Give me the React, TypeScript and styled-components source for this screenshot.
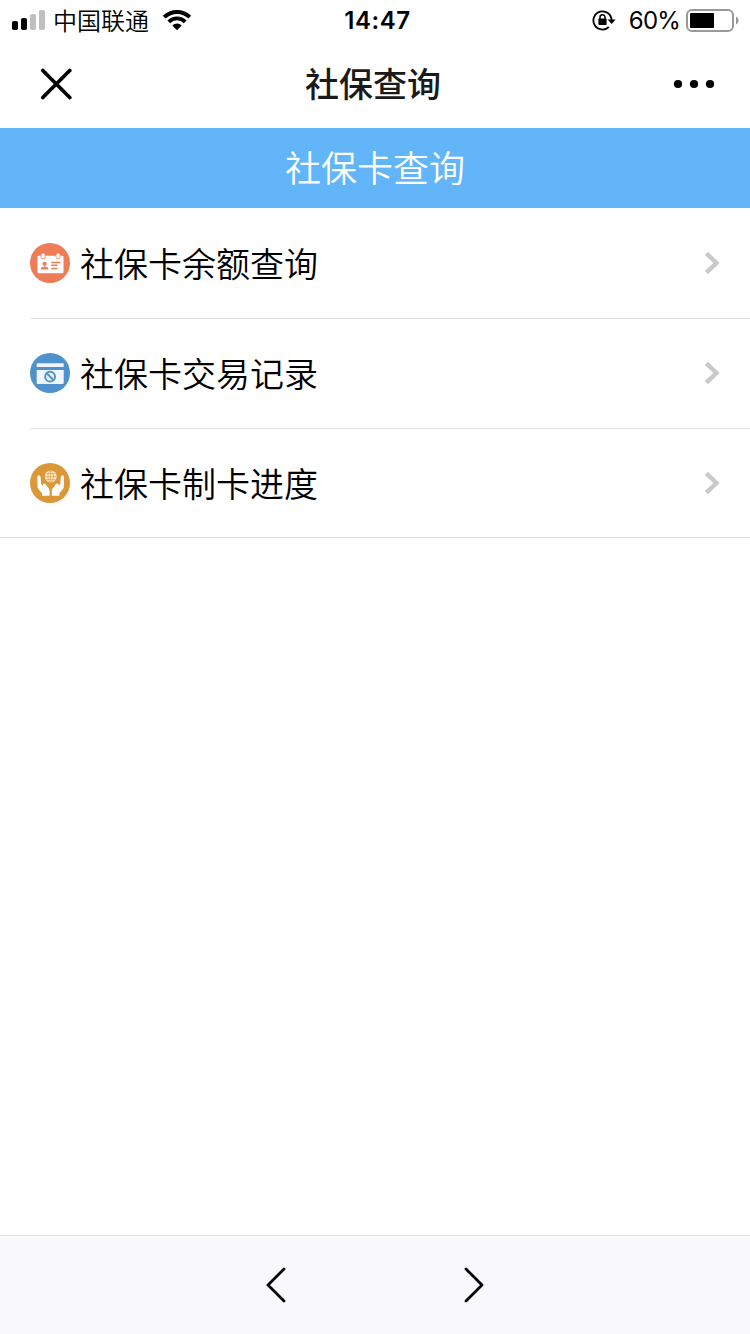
import React from 'react';
import styled, { createGlobalStyle } from 'styled-components';

const GlobalStyle = createGlobalStyle`
  * { box-sizing: border-box; }
  body {
    margin: 0;
    background: #fff;
    color: #000;
    font-family: Inter, "Noto Sans CJK SC", sans-serif;
  }
  svg { display: block; flex: none; }
`;

const Screen = styled.div`
  display: flex;
  flex-direction: column;
  width: 750px;
  height: 1334px;
  overflow: hidden;
  background: #fff;
`;

const StatusBar = styled.header`
  display: grid;
  grid-template-columns: 1fr auto 1fr;
  align-items: center;
  height: 40px;
  padding: 0 10px 0 12px;
`;

const StatusGroup = styled.div<{ $end?: boolean }>`
  display: flex;
  align-items: center;
  justify-content: ${(p) => (p.$end ? 'flex-end' : 'flex-start')};
`;

const Carrier = styled.span`
  margin: 0 13px 0 7px;
  font: 350 24px/40px "Noto Sans CJK SC", sans-serif;
`;

const Clock = styled.time`
  padding: 2px 0 0 3px;
  font-size: 24px;
  font-weight: 600;
  line-height: 38px;
  letter-spacing: 0.6px;
`;

const Percent = styled.span`
  margin: 0 6px 0 13px;
  padding-top: 2px;
  font-size: 24px;
  line-height: 38px;
  letter-spacing: -0.8px;
`;

const NavBar = styled.nav`
  display: grid;
  grid-template-columns: 1fr auto 1fr;
  align-items: center;
  height: 88px;
  padding: 0 35px 0 40px;
`;

const NavTitle = styled.h1`
  margin: 0;
  padding: 0 9px 2px 0;
  color: #1a1a1a;
  font: 500 34px/86px "Noto Sans CJK SC", sans-serif;
`;

const NavButton = styled.button<{ $end?: boolean }>`
  justify-self: ${(p) => (p.$end ? 'end' : 'start')};
  padding: 0;
  border: 0;
  background: none;
`;

const Banner = styled.h2`
  height: 80px;
  margin: 0;
  background: #62b5f9;
  color: #fff;
  font: 350 36px/76px "Noto Sans CJK SC", sans-serif;
  text-align: center;
`;

const Menu = styled.ul`
  flex: 1;
  margin: 0;
  padding: 0;
  list-style: none;
`;

const MenuItem = styled.li`
  height: 110px;
  padding-left: 30px;
  &:last-child { border-bottom: 1px solid #e2e2e2; }
`;

const MenuLink = styled.div<{ $divided: boolean }>`
  display: flex;
  align-items: center;
  height: 110px;
  padding-right: 30px;
  box-shadow: ${(p) => (p.$divided ? 'inset 0 1px 0 #e2e2e2' : 'none')};
`;

const MenuLabel = styled.span`
  flex: 1;
  margin-left: 10px;
  font: 350 34px/110px "Noto Sans CJK SC", sans-serif;
`;

const Toolbar = styled.footer`
  display: flex;
  justify-content: center;
  align-items: center;
  gap: 176px;
  height: 99px;
  border-top: 1px solid #e2e2e4;
  background: #f9f9fb;
`;

const SignalIcon = () => (
  <svg width="34" height="22" viewBox="0 0 34 22">
    <rect x="0" y="12" width="6" height="9" rx="1.8" />
    <rect x="9" y="9" width="6" height="12" rx="1.8" />
    <rect x="18" y="5" width="6" height="16" rx="1.8" fill="#bfbfbf" />
    <rect x="27" y="1" width="6" height="20" rx="1.8" fill="#bfbfbf" />
  </svg>
);

const WifiIcon = () => (
  <svg width="30" height="22" viewBox="0 0 30 22" fill="none" stroke="#000" strokeWidth="3.9">
    <path d="M2.2 8.2a18.2 18.2 0 0 1 25.6 0" />
    <path d="M6.8 12.8a11.6 11.6 0 0 1 16.4 0" />
    <path d="M15 21.2l-4.7-4.7a6.7 6.7 0 0 1 9.4 0z" fill="#000" stroke="none" />
  </svg>
);

const RotationLockIcon = () => (
  <svg width="24" height="22" viewBox="0 0 24 22" fill="none" stroke="#000" strokeWidth="1.8">
    <path d="M16.8 18A9.1 9.1 0 1 1 19.6 11" />
    <path d="M15.6 10.4h8L19.6 15z" fill="#000" stroke="none" />
    <rect x="6.4" y="9.4" width="8.2" height="6.6" rx="0.8" fill="#000" stroke="none" />
    <path d="M8 10V8.2a2.5 2.5 0 0 1 5 0V10" strokeWidth="1.5" />
  </svg>
);

const BatteryIcon = () => (
  <svg width="54" height="24" viewBox="0 0 54 24">
    <rect x="1" y="2" width="46" height="21" rx="5" fill="none" stroke="#999" strokeWidth="2" />
    <rect x="4" y="5" width="24" height="15" rx="0.8" />
    <path d="M50 8.500c3.400 1.600 3.400 6.400 0 8z" fill="#999" />
  </svg>
);

const CloseIcon = () => (
  <svg width="33" height="32" viewBox="0 0 33 32">
    <path d="M2.8 2.500l27 27M29.800 2.500l-27 27" stroke="#000" strokeWidth="3.700" strokeLinecap="round" />
  </svg>
);

const MoreIcon = () => (
  <svg width="42" height="10" viewBox="0 0 42 10">
    <circle cx="5" cy="5" r="4.1" />
    <circle cx="21" cy="5" r="4.1" />
    <circle cx="37" cy="5" r="4.1" />
  </svg>
);

const CalendarCardIcon = () => (
  <svg width="40" height="40" viewBox="0 0 40 40">
    <circle cx="20" cy="20" r="20" fill="#ee7c57" />
    <rect x="7.5" y="12.8" width="26" height="17.5" rx="1.2" fill="#fff" />
    <g fill="#fff" stroke="#ee7c57" strokeWidth="0.8">
      <rect x="11" y="10" width="4.2" height="5.8" rx="2.1" />
      <rect x="26" y="10" width="4.2" height="5.8" rx="2.1" />
    </g>
    <g fill="#ee7c57">
      <circle cx="14.6" cy="20.8" r="2.1" />
      <path d="M10.8 26.500c0-2.400 1.800-3 3.800-3s3.800.6 3.800 3z" />
      <path d="M21.3 18.700h9.200v1.500h-9.200zM21.300 21.600h6v1.500h-6zM21.300 24.700h6v1.600h-6z" />
    </g>
  </svg>
);

const CardRecordIcon = () => (
  <svg width="40" height="40" viewBox="0 0 40 40">
    <circle cx="20" cy="20" r="20" fill="#4f91ca" />
    <path d="M6.7 14v-2.700q0-1 1-1h25q1 0 1 1V14z" fill="#eff5fa" />
    <path d="M6.7 17h27v13q0 1-1 1h-25q-1 0-1-1z" fill="#eff5fa" />
    <g fill="none" stroke="#4f91ca" strokeWidth="2">
      <circle cx="20.1" cy="23.7" r="4.9" />
      <path d="M16.9 20.400l6.500 6.600" />
    </g>
  </svg>
);

const HandsGlobeIcon = () => (
  <svg width="40" height="40" viewBox="0 0 40 40">
    <circle cx="20" cy="20" r="20" fill="#db9738" />
    <circle cx="20.700" cy="13.600" r="6" fill="#fae8cc" />
    <g fill="none" stroke="#db9738" strokeWidth="0.600">
      <ellipse cx="20.700" cy="13.600" rx="2.800" ry="5.700" />
      <path d="M20.700 8v11.200M15 13.600h11.400M16.200 10.600h9M16.200 16.600h9" />
    </g>
    <g fill="#fff">
      <path d="M7.300 13.800c0-1.900 3-1.900 3.200 0l.7 7.200 1.900 2c-1-2 .7-3.500 2.200-2l3.200 3.900q1.100 1.200 1.100 3V32.800h-7.600v-2.500L8.400 26q-.7-.9-.8-2z" />
      <path d="M34.100 13.800c0-1.900-3-1.900-3.200 0l-.7 7.200-1.900 2c1-2-.7-3.500-2.200-2l-3.200 3.900q-1.100 1.200-1.100 3V32.800h7.600v-2.500L33 26q.7-.9.8-2z" />
    </g>
  </svg>
);

const DisclosureIcon = () => (
  <svg width="16" height="24" viewBox="0 0 16 24">
    <path d="M2.400 2.400L12.400 12 2.400 21.600" fill="none" stroke="#c8c8cd" strokeWidth="4.400" />
  </svg>
);

const ArrowIcon = ({ forward = false }: { forward?: boolean }) => (
  <svg width="22" height="36" viewBox="0 0 22 36">
    <path
      d={forward ? 'M3 2l16 16L3 34' : 'M19 2L3 18l16 16'}
      fill="none"
      stroke="#000"
      strokeWidth="2.8"
      strokeLinecap="round"
      strokeLinejoin="round"
    />
  </svg>
);

const items = [
  { label: '社保卡余额查询', Icon: CalendarCardIcon },
  { label: '社保卡交易记录', Icon: CardRecordIcon },
  { label: '社保卡制卡进度', Icon: HandsGlobeIcon },
];

export default function App() {
  return (
    <>
      <GlobalStyle />
      <Screen>
        <StatusBar>
          <StatusGroup>
            <SignalIcon />
            <Carrier>中国联通</Carrier>
            <WifiIcon />
          </StatusGroup>
          <Clock>14:47</Clock>
          <StatusGroup $end>
            <RotationLockIcon />
            <Percent>60%</Percent>
            <BatteryIcon />
          </StatusGroup>
        </StatusBar>
        <NavBar>
          <NavButton aria-label="关闭"><CloseIcon /></NavButton>
          <NavTitle>社保查询</NavTitle>
          <NavButton $end aria-label="更多"><MoreIcon /></NavButton>
        </NavBar>
        <Banner>社保卡查询</Banner>
        <Menu>
          {items.map(({ label, Icon }, index) => (
            <MenuItem key={label}>
              <MenuLink $divided={index > 0}>
                <Icon />
                <MenuLabel>{label}</MenuLabel>
                <DisclosureIcon />
              </MenuLink>
            </MenuItem>
          ))}
        </Menu>
        <Toolbar>
          <NavButton aria-label="后退"><ArrowIcon /></NavButton>
          <NavButton aria-label="前进"><ArrowIcon forward /></NavButton>
        </Toolbar>
      </Screen>
    </>
  );
}
